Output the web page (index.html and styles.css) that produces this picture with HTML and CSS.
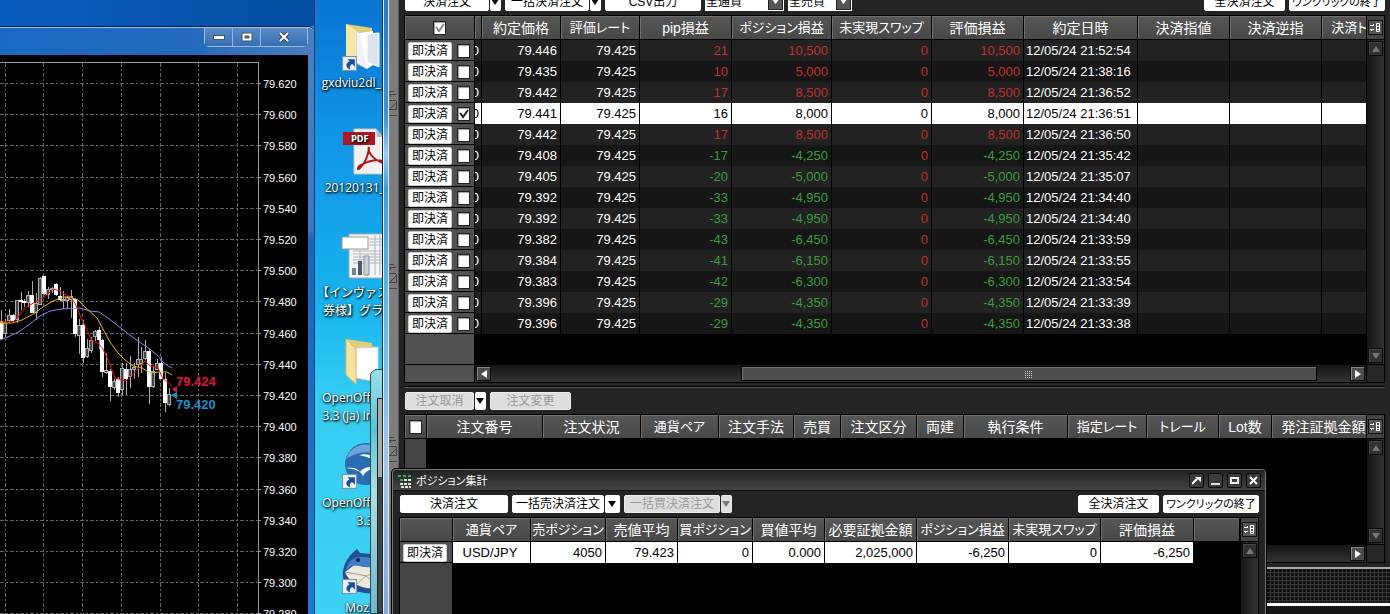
FILE: index.html
```html
<!DOCTYPE html>
<html lang="ja">
<head>
    <meta charset="UTF-8">
    <meta name="viewport" content="width=device-width, initial-scale=1.0">
    <title>ポジション集計</title>
    <link rel="stylesheet" href="styles.css">
</head>
<body>
    <svg class="symbols" aria-hidden="true">
        <symbol id="down" viewBox="0 0 8 8"><path d="M0 1h8L4 7z"/></symbol>
        <symbol id="up" viewBox="0 0 8 8"><path d="M0 7h8L4 1z"/></symbol>
        <symbol id="left" viewBox="0 0 8 8"><path d="M7 0v8L1 4z"/></symbol>
        <symbol id="right" viewBox="0 0 8 8"><path d="M1 0v8l6-4z"/></symbol>
        <symbol id="columns" viewBox="0 0 11 11">
            <path d="M0 3.500h4M0 7.500h4M3.500 2v1M1.500 8v1" stroke="#fff" fill="none"/>
            <path d="M6.500 1.500h3v8h-3zM6 4.500h4M6 7.500h4" stroke="#fff" fill="none"/>
        </symbol>
        <symbol id="shortcut" viewBox="0 0 14 14">
            <rect x=".5" y=".5" width="13" height="13" fill="#e9f2fa" stroke="#7f93a6"/>
            <path d="M5 3h7v7L9.500 7.500C7.500 8.500 7 10 7.500 12.500 2.500 11 3.500 6.500 7 5z" fill="#1c4f96"/>
        </symbol>
        <symbol id="dock" viewBox="0 0 8 26">
            <path d="M0 1.500h5M1.500 4v3M0 4.500h7M0 10.500h7M7.500 11v9M7 13L1 19M0 19.500h7M0 25.500h8" stroke="#444" fill="none"/>
        </symbol>
    </svg>

    <main class="desktop">
        <ul class="desktop-icons">
            <li>
                <svg class="icon" width="42" height="50" viewBox="0 0 42 50">
                    <path d="M5 1l26 4v32H7z" fill="#e3cf78"/>
                    <path d="M15 8l11 4v34l-11-6z" fill="#f1f3f7" stroke="#bcc3ce"/>
                    <path d="M19 10l13-2v34l-6 4z" fill="#fff"/>
                    <path d="M26 11l12-1v34l-12-5z" fill="#dfe3ea" stroke="#fff"/>
                    <path d="M5 1l10 6v34L5 36z" fill="#f6e9a6"/>
                    <use href="#shortcut" x="1" y="33" width="15" height="15"/>
                </svg>
                <span>gxdviu2dl_1010</span>
            </li>
            <li>
                <svg class="icon" width="42" height="50" viewBox="0 0 42 50">
                    <path d="M13 1h22l7 8v37H13z" fill="#f1f1f1" stroke="#c4c4c4"/>
                    <path d="M35 1l7 8h-6z" fill="#b4b9bd"/>
                    <rect x="2" y="4" width="32" height="13" fill="#ae1826"/>
                    <text x="10" y="14" class="pdf-tag">PDF</text>
                    <path d="M28 19c0 6-3 15-9 21-3 3-3-1 1-3 7-4 14-6 22-4M28 19c-2 4 3 12 14 16" fill="none" stroke="#b3141c" stroke-width="2"/>
                </svg>
                <span>20120131_001</span>
            </li>
            <li>
                <svg class="icon" width="42" height="50" viewBox="0 0 42 50">
                    <path d="M8 1h34v44H8z" fill="#f4f4f4" stroke="#aaa"/>
                    <path d="M28 6h14M28 9h14M28 12h14M12 18h30M12 21h30M12 24h30M12 27h30M12 30h30M34 2v40M39 2v40M19 17v26" stroke="#b3b6ba" fill="none"/>
                    <rect x="1" y="4" width="26" height="12" fill="#fff" stroke="#999"/>
                    <path d="M11 35h4v7h-4z" fill="#77828e"/>
                    <path d="M17 28h4v14h-4z" fill="#4c5a6a"/>
                    <path d="M23 23h5v19h-5z" fill="#ccd1d7" stroke="#8a939c"/>
                </svg>
                <span>【インヴァスト証<br>券様】グランド</span>
            </li>
            <li>
                <svg class="icon" width="42" height="50" viewBox="0 0 42 50">
                    <path d="M5 1l26 4v32H7z" fill="#e3cf78"/>
                    <path d="M15 10l22-1v35l-22-4z" fill="#fff" stroke="#c9ced6"/>
                    <path d="M5 1l10 10v35L5 37z" fill="#f6e29a" stroke="#d6bf6a"/>
                </svg>
                <span>OpenOffice.org<br>3.3 (ja) Installer</span>
            </li>
            <li>
                <svg class="icon" width="42" height="50" viewBox="0 0 42 50">
                    <circle cx="25" cy="21" r="21" fill="#2a6db5"/>
                    <path d="M5 16a21 21 0 0 1 40 0c-12-10-28-8-40 0z" fill="#6fa3d6"/>
                    <path d="M5 25c6-1 12 0 14 4 3-5 10-6 22-5-9 1-16 3-19 9-3-6-9-7-17-8zM18 12c8-2 14 0 19 6-6-3-12-4-19-6z" fill="#fff"/>
                    <use href="#shortcut" x="1" y="31" width="15" height="15"/>
                </svg>
                <span>OpenOffice.org<br>3.3</span>
            </li>
            <li>
                <svg class="icon" width="42" height="50" viewBox="0 0 42 50">
                    <path d="M2 30C1 14 10 6 16 1l3 4 23 2v38c-20 2-38-2-40-15z" fill="#1f4f94"/>
                    <path d="M4 24l12-9 26 5v19c-14 4-32 0-38-15z" fill="#ece8dc"/>
                    <path d="M4 24l22 4 14-8M16 36l9-8 12 10" fill="none" stroke="#a8a294"/>
                    <path d="M5 22C8 9 18 7 29 10c5 2 9 0 13 1-4 8-15 10-24 7-6-1-9 0-13 4z" fill="#3f7fc8"/>
                    <circle cx="17" cy="12" r="2" fill="#123"/>
                    <use href="#shortcut" x="1" y="31" width="15" height="15"/>
                </svg>
                <span>Mozilla</span>
            </li>
        </ul>

        <section class="chart-window">
            <header class="chart-title">
                <div class="caption-buttons">
                    <button type="button" aria-label="最小化"><svg width="12" height="5"><rect x=".5" y=".5" width="11" height="4" fill="#fff" stroke="#456"/></svg></button>
                    <button type="button" aria-label="最大化"><svg width="12" height="10"><path d="M1 1h10v8H1zM4 4h4v2H4z" fill="#fff" fill-rule="evenodd" stroke="#456"/></svg></button>
                    <button type="button" class="close" aria-label="閉じる"><svg width="12" height="10"><path d="M2 1l8 8M10 1L2 9" stroke="#345" stroke-width="4"/><path d="M2 1l8 8M10 1L2 9" stroke="#fff" stroke-width="2"/></svg></button>
                </div>
            </header>
            <svg class="chart" id="chart">
                <g id="gridLines"></g>
                <g id="candles"></g>
                <polyline class="ma-long" points="0,285 10,281 20,276 30,269 40,261 50,256 62,254 80,253 90,256 99,257 108,263 122,274 135,284 147,292 157,300 163,307 168,311 172,313"/>
                <polyline class="ma-mid" points="0,268 12,268 22,265 35,258 43,252 53,246 63,242 70,242 78,245 85,252 97,263 103,274 110,287 118,298 125,305 133,311 142,313 150,318 160,317 167,317 172,320"/>
                <polyline class="ma-short" points="0,267 13,267 17,263 25,253 35,247 43,243 48,239 53,234 60,236 70,242 75,248 80,260 87,275 92,286 98,288 103,294 108,305 115,323 125,326 130,323 137,315 145,306 150,311 158,313 163,324 168,327 172,332"/>
                <path d="M177 331v7l-5-4z" fill="#d8143c"/>
                <path d="M177 337v7l-6-4z" fill="#1c8fc8"/>
                <text class="ask" x="176" y="331">79.424</text>
                <text class="bid" x="176" y="354">79.420</text>
            </svg>
        </section>

        <div class="back-window"><div class="back-inner"></div></div>

        <section class="main-window">
            <div class="glass"></div>
            <div class="dock-strip">
                <svg width="8" height="26"><use href="#dock"/></svg>
                <svg width="8" height="26"><use href="#dock"/></svg>
                <svg width="8" height="26"><use href="#dock"/></svg>
            </div>
            <div class="main-body">
                <div class="panels">
                    <div class="toolbar">
                        <div class="split"><button type="button" class="btn w-85">決済注文</button><button type="button" class="btn drop" aria-label="決済注文メニュー"><svg width="8" height="8"><use href="#down"/></svg></button></div>
                        <div class="split"><button type="button" class="btn w-85">一括決済注文</button><button type="button" class="btn drop" aria-label="一括決済注文メニュー"><svg width="8" height="8"><use href="#down"/></svg></button></div>
                        <button type="button" class="btn w-96">CSV出力</button>
                        <div class="select currency"><select aria-label="通貨"><option>全通貨</option></select><svg width="8" height="8"><use href="#down"/></svg></div>
                        <div class="select side-select"><select aria-label="売買"><option>全売買</option></select><svg width="8" height="8"><use href="#down"/></svg></div>
                        <button type="button" class="btn w-81 push">全決済注文</button>
                        <button type="button" class="btn w-96 long">ワンクリックの終了</button>
                    </div>

                    <div class="grid positions">
                        <div class="grid-view">
                            <table>
                                <colgroup>
                                    <col class="c70"><col class="c7"><col class="c79"><col class="c79"><col class="c92"><col class="c100"><col class="c100"><col class="c92"><col class="c114"><col class="c92"><col class="c92"><col class="c92">
                                </colgroup>
                                <thead>
                                    <tr>
                                        <th><input type="checkbox" class="all" checked aria-label="すべて選択"></th>
                                        <th></th><th>約定価格</th><th class="kana">評価レート</th><th>pip損益</th><th class="kana">ポジション損益</th><th class="kana">未実現スワップ</th><th>評価損益</th><th>約定日時</th><th>決済指値</th><th>決済逆指</th><th class="kana">決済トレール</th>
                                    </tr>
                                </thead>
                                <tbody id="positions"></tbody>
                            </table>
                        </div>
                        <div class="grid-side">
                            <div class="side-head"><button type="button" class="tool" aria-label="列の設定"><svg width="11" height="11"><use href="#columns"/></svg></button></div>
                            <div class="v-track"><span class="arrow"><svg width="8" height="8"><use href="#up"/></svg></span><span class="arrow"><svg width="8" height="8"><use href="#down"/></svg></span></div>
                        </div>
                        <div class="h-row">
                            <div class="h-corner"></div>
                            <div class="h-track">
                                <span class="arrow on"><svg width="8" height="8"><use href="#left"/></svg></span>
                                <div class="thumb"></div>
                                <span class="arrow on"><svg width="8" height="8"><use href="#right"/></svg></span>
                            </div>
                        </div>
                        <div class="h-end"></div>
                    </div>

                    <div class="toolbar orders-bar">
                        <div class="split"><button type="button" class="btn w-70" disabled>注文取消</button><button type="button" class="btn drop" aria-label="注文取消メニュー"><svg width="8" height="8"><use href="#down"/></svg></button></div>
                        <button type="button" class="btn w-81" disabled>注文変更</button>
                    </div>

                    <div class="grid orders">
                        <div class="grid-view">
                            <table>
                                <colgroup>
                                    <col class="c22"><col class="c116"><col class="c98"><col class="c78"><col class="c75"><col class="c47"><col class="c76"><col class="c47"><col class="c104"><col class="c79"><col class="c72"><col class="c53"><col class="c104">
                                </colgroup>
                                <thead>
                                    <tr>
                                        <th><input type="checkbox" aria-label="すべて選択"></th>
                                        <th>注文番号</th><th>注文状況</th><th class="kana">通貨ペア</th><th>注文手法</th><th>売買</th><th>注文区分</th><th>両建</th><th>執行条件</th><th class="kana">指定レート</th><th class="kana">トレール</th><th>Lot数</th><th>発注証拠金額</th>
                                    </tr>
                                </thead>
                            </table>
                        </div>
                        <div class="grid-side">
                            <div class="side-head"><button type="button" class="tool" aria-label="列の設定"><svg width="11" height="11"><use href="#columns"/></svg></button></div>
                            <div class="v-track"><span class="arrow"><svg width="8" height="8"><use href="#up"/></svg></span><span class="arrow"><svg width="8" height="8"><use href="#down"/></svg></span></div>
                        </div>
                        <div class="h-row">
                            <div class="h-track">
                                <span class="arrow on push"><svg width="8" height="8"><use href="#right"/></svg></span>
                            </div>
                        </div>
                        <div class="h-end"></div>
                    </div>
                </div>
                <footer class="status"></footer>
            </div>
        </section>

        <section class="popup">
            <header class="popup-title">
                <svg width="14" height="14" viewBox="0 0 14 14">
                    <path d="M0 1h3v2H0zM5 1h3v2H5zM10 1h3v2h-3zM2 5h3v2H2z" fill="#35a852"/>
                    <path d="M6 5h3v2H6zM10 5h3v2h-3zM2 9h3v2H2zM6 9h3v2H6zM10 9h3v2h-3zM3 12h3v2H3zM7 12h3v2H7zM11 12h2v2h-2z" fill="#dfe8df"/>
                </svg>
                <h1>ポジション集計</h1>
                <button type="button" aria-label="切り離し"><svg width="9" height="9"><path d="M0 8l5-5" stroke="#fff" stroke-width="2"/><path d="M3 1h6v5z" fill="#fff"/></svg></button>
                <button type="button" aria-label="最小化"><svg width="9" height="9"><path d="M0 8h9" stroke="#ddd" stroke-width="2"/></svg></button>
                <button type="button" aria-label="最大化"><svg width="9" height="9"><path d="M1 2h7v5H1z" stroke="#eee" stroke-width="2" fill="none"/></svg></button>
                <button type="button" aria-label="閉じる"><svg width="9" height="9"><path d="M1 1l7 7M8 1L1 8" stroke="#fff" stroke-width="2"/></svg></button>
            </header>
            <div class="popup-body">
                <div class="toolbar">
                    <button type="button" class="btn w-108">決済注文</button>
                    <div class="split"><button type="button" class="btn w-92">一括売決済注文</button><button type="button" class="btn drop" aria-label="一括売決済注文メニュー"><svg width="8" height="8"><use href="#down"/></svg></button></div>
                    <div class="split"><button type="button" class="btn w-96" disabled>一括買決済注文</button><button type="button" class="btn drop" disabled aria-label="一括買決済注文メニュー"><svg width="8" height="8"><use href="#down"/></svg></button></div>
                    <button type="button" class="btn w-81 push">全決済注文</button>
                    <button type="button" class="btn w-96 long">ワンクリックの終了</button>
                </div>
                <div class="grid summary">
                    <div class="grid-view">
                        <table>
                            <colgroup>
                                <col class="c53"><col class="c78"><col class="c75"><col class="c72"><col class="c75"><col class="c72"><col class="c92"><col class="c92"><col class="c92"><col class="c93"><col>
                            </colgroup>
                            <thead>
                                <tr><th></th><th class="kana">通貨ペア</th><th class="kana">売ポジション</th><th>売値平均</th><th class="kana">買ポジション</th><th>買値平均</th><th>必要証拠金額</th><th class="kana">ポジション損益</th><th class="kana">未実現スワップ</th><th>評価損益</th><th></th></tr>
                            </thead>
                            <tbody>
                                <tr class="selected">
                                    <td class="action"><div class="row-tools"><button type="button" class="btn close-now">即決済</button></div></td>
                                    <td class="pair">USD/JPY</td><td>4050</td><td>79.423</td><td>0</td><td>0.000</td><td>2,025,000</td><td>-6,250</td><td>0</td><td>-6,250</td><td class="blank"></td>
                                </tr>
                            </tbody>
                        </table>
                    </div>
                    <div class="grid-side">
                        <div class="side-head"><button type="button" class="tool" aria-label="列の設定"><svg width="11" height="11"><use href="#columns"/></svg></button></div>
                        <div class="v-track"><span class="arrow"><svg width="8" height="8"><use href="#up"/></svg></span></div>
                    </div>
                </div>
            </div>
        </section>
    </main>

    <script src="script.js"></script>
</body>
</html>
```
FILE: styles.css
```css
* {
    margin: 0;
    padding: 0;
    box-sizing: border-box;
}

body {
    height: 100vh;
    overflow: hidden;
    font-family: "Liberation Sans", "Noto Sans CJK JP", sans-serif;
    font-size: 13px;
    color: #fff;
}

button,
select {
    font: inherit;
}

svg {
    display: block;
    flex: none;
}

.symbols {
    position: absolute;
    width: 0;
    height: 0;
}

.desktop {
    position: relative;
    height: 100%;
    overflow: hidden;
    background: linear-gradient(#0a74d2, #1092e4 20%, #18b4ee 50%, #36cdf2 65%, #3ed2f4);
}

/* desktop icons */
.desktop-icons {
    position: absolute;
    top: 23px;
    left: 315px;
    width: 100px;
    list-style: none;
    display: grid;
    grid-auto-rows: 105px;
}

.desktop-icons li {
    text-align: center;
    font: 12px/18px "Open Sans", "Noto Sans CJK JP", sans-serif;
    text-shadow: 1px 1px 2px #000, 0 1px 3px #000;
    white-space: nowrap;
}

.desktop-icons .icon {
    margin: 0 0 1px 26px;
}

.pdf-tag {
    font: bold 8px "DejaVu Sans", sans-serif;
    fill: #fff;
}

/* chart window */
.chart-window {
    position: absolute;
    top: 0;
    bottom: 0;
    left: 0;
    width: 315px;
    padding: 27px 6px 0 0;
    background: linear-gradient(90deg, #0a5cbc, #044da2) 0 0 / 100% 26px no-repeat, linear-gradient(#4a82c4, #3a78c2 230px, #1a66bc 240px, #2277d2);
    border-right: 1px solid #1c3f70;
    display: flex;
    flex-direction: column;
}

.chart-title {
    height: 28px;
    margin-right: -6px;
    padding-right: 6px;
    border-top: 1px solid #9cc4ea;
    border-radius: 0 6px 0 0;
    background: linear-gradient(90deg, #1a6ac4, #2469bc 60%, #4a7fc0);
    box-shadow: 0 -1px 0 #021c40;
    display: flex;
    justify-content: flex-end;
}

.caption-buttons {
    height: 19px;
    display: flex;
    border: 1px solid #9ebfe2;
    border-top: 0;
    border-radius: 0 0 5px 5px;
}

.caption-buttons button {
    width: 28px;
    border: 0;
    border-right: 1px solid #8fb2da;
    background: linear-gradient(#5a8cc8, #376fb5);
    display: flex;
    align-items: center;
    justify-content: center;
}

.caption-buttons .close {
    width: 46px;
    border-right: 0;
}

.chart {
    flex: 1;
    width: 100%;
    background: #000;
}

.chart .grid-line {
    stroke: #666;
    stroke-dasharray: 4 2 2 2;
    shape-rendering: crispEdges;
}

.chart .axis {
    stroke: #999;
    fill: none;
    shape-rendering: crispEdges;
}

.chart text {
    font-size: 11px;
    fill: #fff;
}

.chart .ask,
.chart .bid {
    font-size: 13px;
    font-weight: bold;
    fill: #e0143c;
}

.chart .bid {
    fill: #1c8fc8;
}

.chart polyline {
    fill: none;
    stroke-width: 1;
}

.ma-long { stroke: #8c88ea; }
.ma-mid { stroke: #e8b818; }
.ma-short { stroke: #f01010; }

.wick { stroke: #aaa; }
.candle-down { fill: #fff; stroke: #fff; }
.candle-up { fill: #444; stroke: #aaa; }

/* sliver of a window behind the terminal */
.back-window {
    position: absolute;
    top: 369px;
    bottom: 0;
    left: 370px;
    width: 24px;
    padding: 28px 0 0 6px;
    border: 1px solid #2b4a54;
    border-radius: 7px 0 0 0;
    background: linear-gradient(#9be0e6, #55c5d8 60px, #a8dfe6 120px, #6cb8cc);
}

.back-inner {
    height: 100%;
    border: 1px solid #222;
    background: linear-gradient(#aaa 78px, #444 78px);
}

/* trading terminal */
.main-window {
    position: absolute;
    top: -12px;
    right: 0;
    bottom: 0;
    left: 382px;
    display: flex;
    background: #242424;
}

.glass {
    width: 7px;
    border-left: 1px solid #0c2c44;
    border-right: 1px solid #d9ecf8;
    box-shadow: inset 1px 0 0 #e4f3fb;
    background: linear-gradient(#2778bd, #3c94d0 130px, #9ccdea 165px, #3aa0d4 200px, #6fbfe0 360px, #a9c4e4 480px, #87a9d0);
}

.dock-strip {
    width: 10px;
    padding-top: 102px;
    border-right: 1px solid #555;
    background: #7d7d7d;
    display: flex;
    flex-direction: column;
    gap: 147px;
}

.main-body {
    flex: 1;
    min-width: 0;
    display: flex;
    flex-direction: column;
}

.panels {
    flex: 1;
    min-height: 0;
    padding: 5px 5px 4px;
    display: flex;
    flex-direction: column;
}

.status {
    height: 47px;
    border-top: 2px solid #aaa;
    background:
        linear-gradient(#fff, #fff) 0 34px / 100% 3px no-repeat,
        linear-gradient(#161616, #161616) 0 36px / 100% 12px no-repeat,
        repeating-linear-gradient(transparent 0 3px, #383838 3px 4px),
        repeating-linear-gradient(90deg, #111 0 3px, #383838 3px 4px);
}

/* toolbars */
.toolbar {
    display: flex;
    gap: 4px;
    padding-left: 1px;
    margin-bottom: 4px;
}

.orders-bar {
    margin-top: 4px;
    padding-top: 4px;
    border-top: 1px solid #555;
    box-shadow: 0 -1px 0 #000;
}

.push {
    margin-left: auto;
}

.split {
    display: flex;
}

.btn {
    height: 18px;
    border: 1px solid #fff;
    border-radius: 2px;
    background: #fff;
    color: #000;
    font-size: 12px;
    line-height: 16px;
    font-feature-settings: "palt";
    white-space: nowrap;
}

.btn.long {
    font-size: 11px;
}

.btn:disabled {
    border-color: #ececec;
    background: #dedede;
    color: #999;
}

.drop {
    width: 11px;
    border-left: 0;
    margin-left: 1px;
    display: flex;
    align-items: center;
    justify-content: center;
}

.drop:disabled {
    fill: #777;
}

.w-70 { width: 69px; }
.w-81 { width: 81px; }
.w-85 { width: 84px; }
.w-92 { width: 92px; }
.w-96 { width: 96px; }
.w-108 { width: 108px; }

.popup .w-92 + .drop {
    width: 15px;
}

.select {
    height: 18px;
    border: 1px solid #fff;
    background: #fff;
    display: flex;
    align-items: stretch;
}

.select select {
    flex: 1;
    min-width: 0;
    appearance: none;
    border: 0;
    background: #fff;
    color: #000;
    font-size: 12px;
    line-height: 16px;
}

.select svg {
    width: 15px;
    height: 16px;
    padding: 4px 3px;
    background: #555;
    border: 1px solid #222;
    fill: #fff;
}

.currency { width: 79px; }
.side-select { width: 64px; }

/* data grids */
.grid {
    display: grid;
    grid-template-columns: minmax(0, 1fr) 18px;
    border: 1px solid #000;
    background: #000;
}

.grid-view {
    overflow: hidden;
}

.positions {
    grid-template-rows: auto 18px;
}

.positions .grid-view {
    padding-bottom: 30px;
    background: linear-gradient(90deg, #515151 69px, #000 69px);
}

.orders {
    flex: 1;
    grid-template-rows: minmax(0, 1fr) 18px;
}

.orders .grid-view {
    background: linear-gradient(90deg, #444 21px, #000 21px);
}

table {
    table-layout: fixed;
    border-collapse: separate;
    border-spacing: 0;
    width: 1009px;
}

.orders table {
    width: 971px;
}

.summary table {
    width: 100%;
}

.c7 { width: 7px; }
.c22 { width: 22px; }
.c47 { width: 47px; }
.c53 { width: 53px; }
.c70 { width: 70px; }
.c72 { width: 72px; }
.c75 { width: 75px; }
.c76 { width: 76px; }
.c78 { width: 78px; }
.c79 { width: 79px; }
.c92 { width: 92px; }
.c93 { width: 93px; }
.c98 { width: 98px; }
.c100 { width: 100px; }
.c104 { width: 104px; }
.c114 { width: 114px; }
.c116 { width: 116px; }

th {
    height: 24px;
    border-right: 1px solid #000;
    border-bottom: 1px solid #000;
    background: linear-gradient(#565656, #484848);
    box-shadow: inset 1px 1px 0 #707070;
    font-size: 14px;
    line-height: 20px;
    font-weight: normal;
    font-feature-settings: "palt";
    white-space: nowrap;
}

th.kana {
    font-size: 13px;
}

td {
    height: 21px;
    padding-right: 3px;
    border-right: 1px solid #000;
    line-height: 21px;
    text-align: right;
    white-space: nowrap;
    overflow: hidden;
}

tbody tr:nth-child(odd) {
    background: #222;
}

tbody tr:nth-child(even) {
    background: #161616;
}

tbody tr.selected {
    background: #fff;
    color: #000;
}

.gain { color: #c03030; }
.loss { color: #3a9c3a; }

.selected .gain,
.selected .loss {
    color: #000;
}

td.cut {
    padding-right: 3px;
    direction: rtl;
}

td.date {
    padding: 0 0 0 2px;
    text-align: left;
}

td.pair {
    text-align: center;
}

td.blank {
    background: #000;
    border-right: 0;
}

td.action {
    padding: 0;
    border-bottom: 1px solid #000;
    background: #515151;
}

.row-tools {
    display: flex;
    align-items: center;
    gap: 5px;
    padding: 1px 0 0 3px;
}

.close-now {
    width: 44px;
    border-color: #ccc;
}

input[type="checkbox"] {
    appearance: none;
    display: block;
    width: 13px;
    height: 14px;
    border: 1px solid #222;
    background: #fff;
    box-shadow: inset 1px 1px 1px #999;
}

th input[type="checkbox"] {
    margin: 0 auto;
}

input[type="checkbox"]:checked {
    background: #fff url("data:image/svg+xml,%3Csvg xmlns='http://www.w3.org/2000/svg' viewBox='0 0 10 10'%3E%3Cpath d='M1 4l3 4 5-7' fill='none' stroke='%23222' stroke-width='2'/%3E%3C/svg%3E") center / 10px 10px no-repeat;
}

input[type="checkbox"].all:checked {
    background-image: url("data:image/svg+xml,%3Csvg xmlns='http://www.w3.org/2000/svg' viewBox='0 0 10 10'%3E%3Cpath d='M1 4l3 4 5-7' fill='none' stroke='%23888' stroke-width='2'/%3E%3C/svg%3E");
}

/* scroll bars */
.grid-side {
    display: flex;
    flex-direction: column;
    border-left: 1px solid #000;
}

.side-head {
    height: 24px;
    padding: 4px 1px;
    border-bottom: 1px solid #000;
    background: #444;
}

.tool {
    width: 15px;
    height: 15px;
    border: 1px solid #111;
    background: #555;
    display: flex;
    align-items: center;
    justify-content: center;
}

.v-track {
    flex: 1;
    padding: 1px;
    background: linear-gradient(90deg, #151515, #333);
    display: flex;
    flex-direction: column;
    justify-content: space-between;
}

.arrow {
    flex: none;
    width: 15px;
    height: 15px;
    border: 1px solid #0a0a0a;
    background: #303030;
    box-shadow: inset 1px 1px 0 #444;
    fill: #777;
    display: flex;
    align-items: center;
    justify-content: center;
}

.arrow.on {
    background: #4c4c4c;
    box-shadow: inset 1px 1px 0 #888;
    fill: #fff;
}

.h-row {
    display: flex;
    border-top: 1px solid #000;
}

.h-corner {
    width: 70px;
    border-right: 1px solid #000;
    background: #515151;
}

.h-track {
    flex: 1;
    padding: 1px;
    background: linear-gradient(#151515, #333);
    display: flex;
}

.positions .h-track::before {
    content: "";
    order: 1;
    flex: 251;
}

.positions .h-track::after {
    content: "";
    order: 3;
    flex: 33;
}

.positions .arrow.on:last-child {
    order: 4;
}

.thumb {
    order: 2;
    flex: 576;
    border: 1px solid #000;
    background: #4e4e4e;
    box-shadow: inset 1px 1px 0 #777;
    display: flex;
    align-items: center;
    justify-content: center;
}

.thumb::before {
    content: "";
    width: 8px;
    height: 8px;
    background: repeating-linear-gradient(#4e4e4e 0 1px, transparent 1px 2px), repeating-linear-gradient(90deg, #ccc 0 1px, #4e4e4e 1px 2px);
}

.h-end {
    border-top: 1px solid #000;
    border-left: 1px solid #000;
    background: #262626;
}

/* summary popup */
.popup {
    position: absolute;
    top: 468px;
    right: 123px;
    bottom: 0;
    left: 391px;
    border: 1px solid #000;
    border-bottom: 0;
    border-radius: 5px 5px 0 0;
    background: #242424;
    box-shadow: inset 1px 1px 0 #777, inset -1px 0 0 #777;
    display: flex;
    flex-direction: column;
}

.popup-title {
    height: 21px;
    padding: 1px 4px 0 5px;
    margin: 1px 1px 0;
    border-bottom: 1px solid #111;
    border-radius: 4px 4px 0 0;
    background: linear-gradient(#222, #444);
    display: flex;
    align-items: center;
    gap: 4px;
}

.popup-title h1 {
    margin-right: auto;
    font-size: 11px;
    line-height: 18px;
    font-weight: normal;
    font-feature-settings: "palt";
}

.popup-title button {
    width: 15px;
    height: 15px;
    border: 1px solid #0a0a0a;
    border-radius: 2px;
    background: #3c3c3c;
    display: flex;
    align-items: center;
    justify-content: center;
}

.popup-body {
    flex: 1;
    min-height: 0;
    padding: 4px 7px 0;
    display: flex;
    flex-direction: column;
}

.summary {
    flex: 1;
    border-bottom: 0;
}

.summary .grid-view {
    background: linear-gradient(90deg, #444 52px, #000 52px);
}
```
FILE: script.js
```js
const svgNs = 'http://www.w3.org/2000/svg';

const positions = [
    ['79.446', '21', '10,500', '21:52:54'],
    ['79.435', '10', '5,000', '21:38:16'],
    ['79.442', '17', '8,500', '21:36:52'],
    ['79.441', '16', '8,000', '21:36:51'],
    ['79.442', '17', '8,500', '21:36:50'],
    ['79.408', '-17', '-4,250', '21:35:42'],
    ['79.405', '-20', '-5,000', '21:35:07'],
    ['79.392', '-33', '-4,950', '21:34:40'],
    ['79.392', '-33', '-4,950', '21:34:40'],
    ['79.382', '-43', '-6,450', '21:33:59'],
    ['79.384', '-41', '-6,150', '21:33:55'],
    ['79.383', '-42', '-6,300', '21:33:54'],
    ['79.396', '-29', '-4,350', '21:33:39'],
    ['79.396', '-29', '-4,350', '21:33:38']
];
const selectedRow = 3;

document.getElementById('positions').innerHTML = positions.map(([price, pip, profit, time], i) => {
    const tone = pip.startsWith('-') ? 'loss' : 'gain';
    const selected = i === selectedRow;
    return `
        <tr class="${selected ? 'selected' : ''}">
            <td class="action"><div class="row-tools">
                <button type="button" class="btn close-now">即決済</button>
                <input type="checkbox" aria-label="${price}を選択" ${selected ? 'checked' : ''}>
            </div></td>
            <td class="cut">0</td>
            <td>${price}</td>
            <td>79.425</td>
            <td class="${tone}">${pip}</td>
            <td class="${tone}">${profit}</td>
            <td class="gain">0</td>
            <td class="${tone}">${profit}</td>
            <td class="date">12/05/24 ${time}</td>
            <td></td><td></td><td></td>
        </tr>`;
}).join('');

function draw(parent, name, attrs, text) {
    const el = document.createElementNS(svgNs, name);
    Object.entries(attrs).forEach(([key, value]) => el.setAttribute(key, value));
    if (text) el.textContent = text;
    parent.appendChild(el);
}

// grid and price scale
const gridLines = document.getElementById('gridLines');
[5, 43, 82, 121, 160, 198, 237].forEach(x => {
    draw(gridLines, 'path', { class: 'grid-line', d: `M${x + 0.5} 8V1200` });
});
for (let i = 0; i < 18; i++) {
    const y = Math.round(28 + i * 31.2);
    draw(gridLines, 'path', { class: 'grid-line', d: `M0 ${y + 0.5}H258` });
    draw(gridLines, 'path', { class: 'axis', d: `M258 ${y + 0.5}h3` });
    draw(gridLines, 'text', { x: 263, y: y + 5 }, (79.62 - i * 0.02).toFixed(3));
}
draw(gridLines, 'path', { class: 'axis', d: 'M0 7.5H258.5V1200' });

// high, body top, body bottom, low, down flag
const candles = [
    [255, 266, 284, 285, 1], [264, 267, 279, 282, 0], [254, 260, 266, 268, 0], [259, 260, 266, 268, 1],
    [245, 245, 265, 268, 0], [237, 245, 247, 255, 1], [244, 246, 248, 252, 1], [236, 240, 248, 252, 0],
    [226, 240, 258, 258, 1], [238, 248, 258, 265, 0], [222, 223, 250, 250, 0], [221, 221, 239, 240, 1],
    [232, 234, 240, 244, 0], [232, 233, 235, 238, 0], [228, 229, 240, 241, 1], [232, 241, 245, 246, 1],
    [236, 244, 246, 254, 0], [240, 242, 246, 254, 0], [235, 241, 245, 263, 0], [243, 244, 279, 282, 1],
    [264, 270, 281, 299, 0], [265, 270, 303, 308, 1], [284, 293, 302, 303, 0], [282, 285, 296, 298, 0],
    [275, 276, 282, 286, 0], [272, 275, 285, 294, 1], [284, 285, 317, 322, 1], [298, 315, 318, 319, 0],
    [314, 316, 332, 346, 1], [324, 326, 333, 335, 0], [322, 324, 338, 342, 1], [308, 313, 335, 340, 0],
    [308, 314, 324, 340, 1], [301, 314, 322, 333, 0], [308, 312, 315, 324, 0], [282, 304, 310, 322, 0],
    [292, 304, 309, 318, 0], [285, 296, 304, 305, 0], [294, 296, 332, 349, 1], [311, 316, 332, 333, 0],
    [304, 308, 315, 315, 0], [302, 308, 324, 324, 1], [318, 324, 348, 357, 1], [333, 339, 350, 351, 0]
];
const candleGroup = document.getElementById('candles');
candles.forEach(([high, top, bottom, low, down], i) => {
    const x = Math.round(1 + i * 3.9) + 0.5;
    draw(candleGroup, 'path', { class: 'wick', d: `M${x} ${high}V${low}` });
    draw(candleGroup, 'rect', {
        class: down ? 'candle-down' : 'candle-up',
        x: x - 2, y: top + 0.5, width: 3, height: Math.max(bottom - top - 1, 1)
    });
});
```
